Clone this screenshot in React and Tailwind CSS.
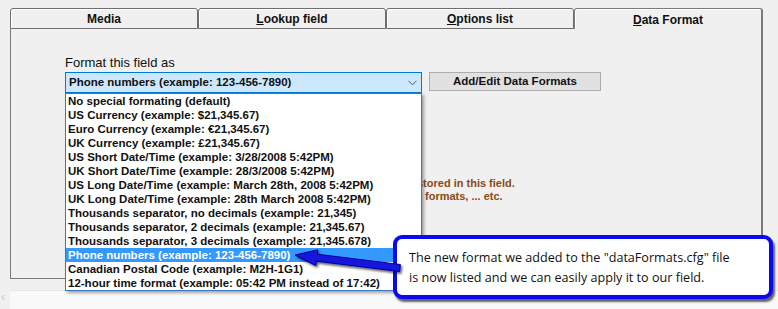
import React from "react";

const items = [
  "No special formating (default)",
  "US Currency (example: $21,345.67)",
  "Euro Currency (example: €21,345.67)",
  "UK Currency (example: £21,345.67)",
  "US Short Date/Time (example: 3/28/2008 5:42PM)",
  "UK Short Date/Time (example: 28/3/2008 5:42PM)",
  "US Long Date/Time (example: March 28th, 2008 5:42PM)",
  "UK Long Date/Time (example: 28th March 2008 5:42PM)",
  "Thousands separator, no decimals (example: 21,345)",
  "Thousands separator, 2 decimals (example: 21,345.67)",
  "Thousands separator, 3 decimals (example: 21,345.678)",
  "Phone numbers (example: 123-456-7890)",
  "Canadian Postal Code (example: M2H-1G1)",
  "12-hour time format (example: 05:42 PM instead of 17:42)",
];

function Tab({ children, active }) {
  return (
    <div
      className={
        active
          ? "h-[21px] w-[189px] border-t border-l border-r-2 border-[#7a7a7a] rounded-t-[3px] bg-[#f0f0f0] shadow-[inset_0_1px_0_#ffffff,inset_1px_0_0_#ffffff] flex items-center justify-center pt-[2px] text-[12px] font-bold text-[#111]"
          : "h-[21px] w-[188px] border border-[#6e6e6e] rounded-t-[3px] bg-[#f0f0f0] shadow-[inset_1px_1px_0_#ffffff] flex items-center justify-center text-[12px] font-bold text-[#111]"
      }
    >
      {children}
    </div>
  );
}

export default function App() {
  return (
    <div className="relative w-[778px] h-[309px] overflow-hidden bg-[#f0f0f0] font-['Liberation_Sans',Arial,sans-serif]">
      {/* tabs */}
      <div className="flex pt-[8px] pl-[10px]">
        <Tab>Media</Tab>
        <Tab>
          <span><span className="underline">L</span>ookup field</span>
        </Tab>
        <Tab>
          <span><span className="underline">O</span>ptions list</span>
        </Tab>
        <Tab active>
          <span><span className="underline">D</span>ata Format</span>
        </Tab>
      </div>

      {/* panel */}
      <div className="ml-[10px] w-[753px] h-[250px] border-l border-b border-r-2 border-[#7a7a7a] pl-[54px] pt-[27px]">
        <div className="text-[13px] leading-[14px] text-[#111]">Format this field as</div>
        <div className="flex mt-[2px] gap-[7px]">
          <div className="relative w-[357px] h-[21px] border border-[#0078d7] bg-[#cce8ff] flex items-center pl-[3px] text-[11.5px] font-bold text-[#111]">
            Phone numbers (example: 123-456-7890)
            <svg className="absolute right-[4px] top-[7px]" width="9" height="6" viewBox="0 0 9 6">
              <path d="M0.5 0.8 L4.5 4.8 L8.5 0.8" fill="none" stroke="#555" strokeWidth="1" />
            </svg>
          </div>
          <div className="w-[172px] h-[19px] border border-[#adadad] bg-[#e1e1e1] flex items-center justify-center text-[11.5px] font-bold text-[#111]">
            Add/Edit Data Formats
          </div>
        </div>
        <div className="mt-[84px] pl-[352px] text-[11px] leading-[13px] font-bold text-[#8b4a12]">
          <div>stored in this field.</div>
          <div className="pl-[8px]">formats, ... etc.</div>
        </div>
      </div>

      {/* bottom scrollbar strip */}
      <div className="flex mt-[11px] h-[19px]">
        <div className="w-[10px] flex items-start justify-start text-[12px] leading-[14px] text-[#c4c4c4] pl-[1px]">‹</div>
        <div className="flex-1 bg-[#f9f9f9] border-t border-[#e6e6e6]" />
      </div>

      {/* dropdown list */}
      <div className="absolute left-[65px] top-[93px] w-[357px] border border-[#3d79b8] bg-white shadow-[2px_2px_3px_rgba(0,0,0,0.35)]">
        {items.map((t, i) => (
          <div
            key={i}
            className={
              i === 11
                ? "h-[14px] leading-[14px] pl-[2px] text-[11.5px] font-bold bg-[#3399ff] text-white whitespace-nowrap"
                : "h-[14px] leading-[14px] pl-[2px] text-[11.5px] font-bold text-[#111] whitespace-nowrap"
            }
          >
            {t}
          </div>
        ))}
      </div>

      {/* callout */}
      <div className="absolute left-[393px] top-[235px] w-[380px] h-[64px] rounded-[9px] border-[4px] border-[#0a0af0] bg-white shadow-[2px_3px_2px_rgba(0,0,0,0.6)] pl-[12px] pt-[9px] text-[12.6px] leading-[20px] text-[#111] font-['Open_Sans',Arial,sans-serif]">
        <div>The new format we added to the "dataFormats.cfg" file</div>
        <div>is now listed and we can easily apply it to our field.</div>
      </div>

      {/* arrow */}
      <svg className="absolute left-0 top-0 pointer-events-none" width="778" height="309" viewBox="0 0 778 309">
        <defs>
          <filter id="sh" x="-10%" y="-50%" width="120%" height="200%">
            <feDropShadow dx="1.5" dy="2" stdDeviation="1" floodColor="#000" floodOpacity="0.6" />
          </filter>
        </defs>
        <polygon
          points="295,255 317.8,249.8 317.2,254.2 400.4,264.5 399.6,271.5 316.4,261.2 315.8,265.6"
          fill="#1414dc"
          stroke="#00009a"
          strokeWidth="1"
          strokeLinejoin="round"
          filter="url(#sh)"
        />
      </svg>
    </div>
  );
}
